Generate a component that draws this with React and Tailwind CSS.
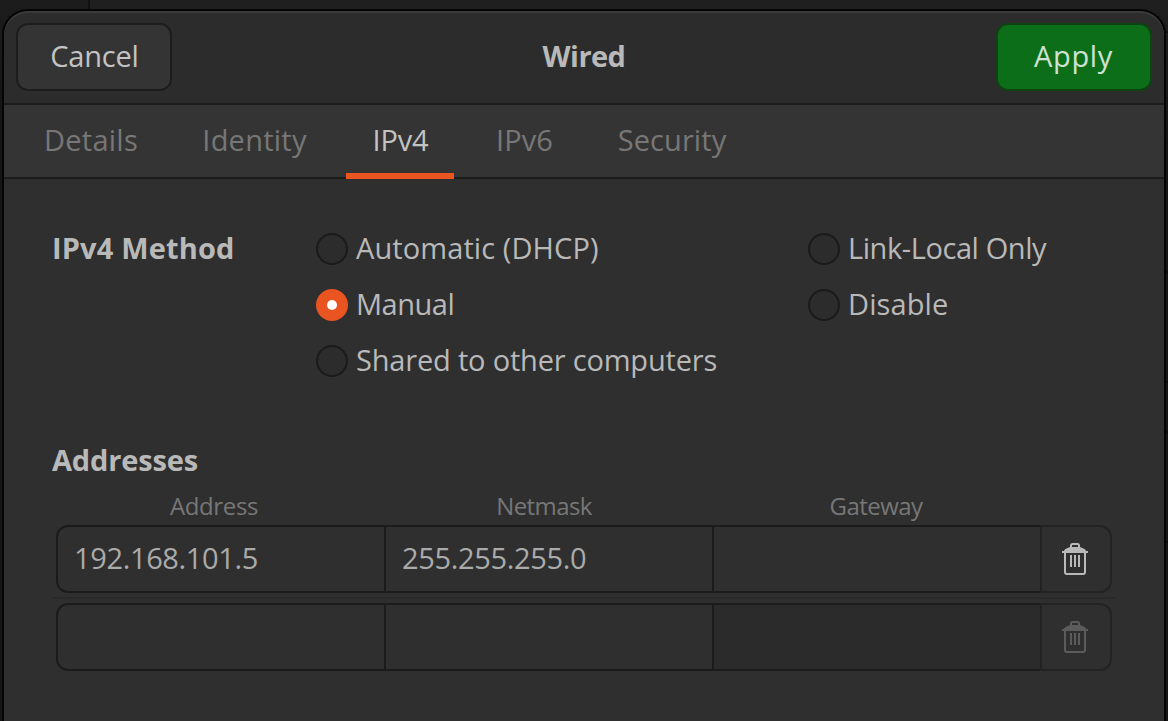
import React from "react";

const TABS = [
  { label: "Details", className: "w-[146px] tracking-[0.25px]" },
  { label: "Identity", className: "ml-[12px] w-[157px] tracking-[0.25px]" },
  { label: "IPv4", className: "ml-[13px] w-[108px] pl-px tracking-[-0.1px]", active: true },
  { label: "IPv6", className: "ml-[16px] w-[108px] pl-px tracking-[0.05px]" },
  { label: "Security", className: "ml-[14px] w-[160px] tracking-[0.09px]" },
];

function TrashIcon({ className }) {
  return (
    <svg width="26" height="32" viewBox="0 0 26 32" className={className} fill="none" aria-hidden="true">
      <path d="M9 5V2.5Q9 1 10.500 1H15.500Q17 1 17 2.500V5" stroke="currentColor" strokeWidth="2" />
      <path d="M8 4H18L21 5.200Q24 6.300 24 8H26V10H0V8H2Q2 6.300 5 5.200Z" fill="currentColor" />
      <path d="M3 9V29Q3 31 5 31H21Q23 31 23 29V9" stroke="currentColor" strokeWidth="2" />
      <path d="M9 12V24M13 12V24M17 12V24" stroke="currentColor" strokeWidth="2" />
    </svg>
  );
}

function Radio({ label, checked, className }) {
  return (
    <label className="flex h-8 items-center gap-2">
      {checked ? (
        <span className="flex size-8 shrink-0 items-center justify-center rounded-full bg-[#e95420]">
          <span className="size-[10px] rounded-full bg-white" />
        </span>
      ) : (
        <span className="size-8 shrink-0 rounded-full border-2 border-[#1a1a1a] bg-[#2c2c2c]" />
      )}
      <span className={`-mt-[2px] whitespace-nowrap ${className}`}>{label}</span>
    </label>
  );
}

function AddressRow({ address, netmask, gatewayClass, iconClass }) {
  return (
    <div className="ml-1 flex h-[68px] w-[1056px] text-[#aaaaaa]">
      <div className="flex w-[330px] items-center rounded-l-[12px] border-2 border-[#1b1b1b] pl-[16px] tracking-[-0.36px]">
        <span className="-mt-[2px]">{address}</span>
      </div>
      <div className="flex w-[328px] items-center border-y-2 border-r-2 border-[#1b1b1b] pl-[16px] tracking-[-0.34px]">
        <span className="-mt-[2px]">{netmask}</span>
      </div>
      <div className={`w-[326px] border-y-2 border-[#1b1b1b] ${gatewayClass}`} />
      <div className="flex w-[72px] items-center justify-center rounded-r-[12px] border-2 border-[#232323] pr-[2px]">
        <TrashIcon className={iconClass} />
      </div>
    </div>
  );
}

export default function App() {
  return (
    <div className="grid h-[721px] w-[1168px] grid-cols-1 grid-rows-1 overflow-hidden bg-[#161616] font-['Open_Sans',sans-serif] text-[29px] leading-8 text-[#b9b9b9]">
      {/* Dimmed window behind the dialog */}
      <div className="col-start-1 row-start-1 flex">
        <div className="w-[88px] bg-linear-to-b from-[#1c1c1c] to-[#151515] to-15%" />
        <div className="w-[2px] bg-[#121212]" />
        <div className="flex flex-1 flex-col items-end bg-linear-to-b from-[#1f1f1f] to-[#151515] to-20%">
          <div className="h-[31px]" />
          <div className="h-[112px] w-6 border-y-2 border-[#111111]" />
          <div className="h-[130px] w-6 border-b-2 border-[#0d0d0d]" />
          <div className="h-[110px] w-6 border-b-2 border-[#0d0d0d]" />
          <div className="h-[50px] w-6 border-b-2 border-[#0d0d0d]" />
          <div className="h-[110px] w-6 border-b-2 border-[#0d0d0d]" />
        </div>
      </div>

      <div className="relative col-start-1 row-start-1 mx-[2px] mt-[9px] flex flex-col overflow-hidden rounded-t-[26px] border-x-2 border-t-2 border-[#040404] bg-[#2f2f2f]">
        <header className="grid h-[94px] shrink-0 grid-cols-[1fr_auto_1fr] items-start rounded-t-[24px] border-b-2 border-b-[#1c1c1c] bg-[#2c2c2c] px-3 pt-3 shadow-[inset_0_2px_0_#3a3a3a]">
          <button className="flex h-[68px] w-[156px] items-center justify-center rounded-[12px] border-2 border-[#1d1d1d] bg-[#343434] pb-[2px] pl-px tracking-[-0.2px] text-[#c3c3c3]">
            Cancel
          </button>
          <h1 className="pt-[17px] font-bold tracking-[-0.55px]">Wired</h1>
          <button className="flex h-[68px] w-[156px] items-center justify-center justify-self-end rounded-[12px] border-2 border-[#0d4412] bg-[#0d6e1a] pr-px pb-[2px] tracking-[0.65px] text-[#cfe2d1]">
            Apply
          </button>
        </header>

        <nav className="flex h-[74px] shrink-0 bg-[#343434] pl-[14px] text-[#777777] shadow-[inset_0_-2px_0_#1c1c1c]">
          {TABS.map((tab) => (
            <div
              key={tab.label}
              className={`flex justify-center pt-[19px] ${tab.className} ${
                tab.active ? "border-b-6 border-[#e95420] text-[#c3c3c3]" : ""
              }`}
            >
              {tab.label}
            </div>
          ))}
        </nav>

        <main className="flex flex-col pl-12 pt-[54px]">
          <section className="flex">
            <h2 className="-mt-px w-[264px] font-bold tracking-[0.15px]">IPv4 Method</h2>
            <div className="flex w-[492px] flex-col gap-6">
              <Radio label="Automatic (DHCP)" className="tracking-[0.09px]" />
              <Radio label="Manual" checked className="tracking-[-0.5px]" />
              <Radio label="Shared to other computers" className="tracking-[-0.19px]" />
            </div>
            <div className="flex flex-col gap-6">
              <Radio label="Link-Local Only" className="tracking-[-0.42px]" />
              <Radio label="Disable" className="tracking-[0.11px]" />
            </div>
          </section>

          <section className="pt-[67px]">
            <h2 className="font-bold tracking-[-0.15px]">Addresses</h2>
            <div className="flex h-[49px] pt-[14px] text-[24px] text-[#777777]">
              <span className="w-[324px] text-center tracking-[-0.36px]">Address</span>
              <span className="w-[336px] text-center tracking-[-0.6px]">Netmask</span>
              <span className="w-[328px] text-center tracking-[-0.55px]">Gateway</span>
            </div>
            <AddressRow
              address="192.168.101.5"
              netmask="255.255.255.0"
              gatewayClass=""
              iconClass="text-[#b9b9b9]"
            />
            <div className="my-1 h-[2px] w-[1064px] bg-[#2a2a2a]" />
            <AddressRow address="" netmask="" gatewayClass="bg-[#2b2b2b]" iconClass="text-[#5b5b5b]" />
          </section>
        </main>
      </div>
    </div>
  );
}
